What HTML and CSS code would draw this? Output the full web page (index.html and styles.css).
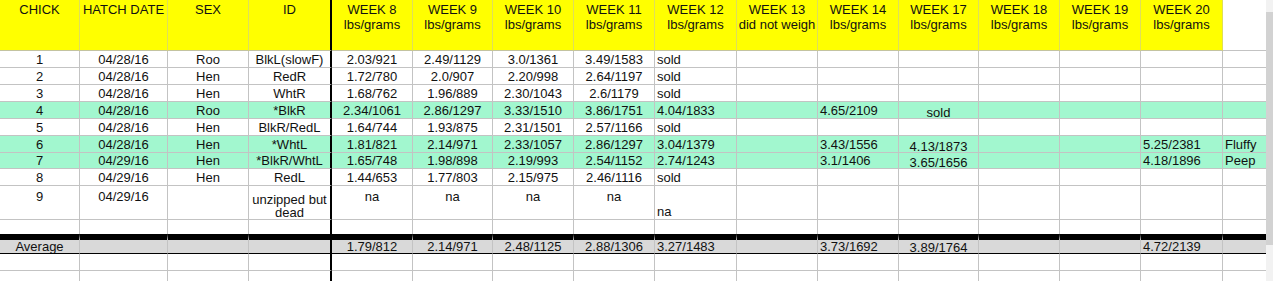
FILE: index.html
```html
<!DOCTYPE html>
<html>
<head>
<meta charset="utf-8">
<link rel="stylesheet" href="styles.css">
</head>
<body>
<div class="sheet">
<table class="grid">
<colgroup>
<col class="w80"><col class="w88"><col class="w81"><col class="w83"><col class="w81"><col class="w80"><col class="w81"><col class="w81"><col class="w82"><col class="w81"><col class="w81"><col class="w80"><col class="w81"><col class="w81"><col class="w82"><col class="w43">
</colgroup>
<thead>
<tr class="hdr">
<th>CHICK</th><th>HATCH DATE</th><th>SEX</th><th class="idc">ID</th>
<th>WEEK 8<br>lbs/grams</th><th>WEEK 9<br>lbs/grams</th><th>WEEK 10<br>lbs/grams</th><th>WEEK 11<br>lbs/grams</th>
<th>WEEK 12<br>lbs/grams</th><th>WEEK 13<br>did not weigh</th><th>WEEK 14<br>lbs/grams</th><th>WEEK 17<br>lbs/grams</th>
<th>WEEK 18<br>lbs/grams</th><th>WEEK 19<br>lbs/grams</th><th>WEEK 20<br>lbs/grams</th><th class="blank last"></th>
</tr>
</thead>
<tbody>
<tr class="r">
<td>1</td><td>04/28/16</td><td>Roo</td><td class="idc">BlkL(slowF)</td><td>2.03/921</td><td>2.49/1129</td><td>3.0/1361</td><td>3.49/1583</td><td class="l">sold</td><td></td><td class="l"></td><td class="w17"></td><td></td><td></td><td class="l"></td><td class="l last"></td>
</tr>
<tr class="r">
<td>2</td><td>04/28/16</td><td>Hen</td><td class="idc">RedR</td><td>1.72/780</td><td>2.0/907</td><td>2.20/998</td><td>2.64/1197</td><td class="l">sold</td><td></td><td class="l"></td><td class="w17"></td><td></td><td></td><td class="l"></td><td class="l last"></td>
</tr>
<tr class="r">
<td>3</td><td>04/28/16</td><td>Hen</td><td class="idc">WhtR</td><td>1.68/762</td><td>1.96/889</td><td>2.30/1043</td><td>2.6/1179</td><td class="l">sold</td><td></td><td class="l"></td><td class="w17"></td><td></td><td></td><td class="l"></td><td class="l last"></td>
</tr>
<tr class="r green">
<td>4</td><td>04/28/16</td><td>Roo</td><td class="idc">*BlkR</td><td>2.34/1061</td><td>2.86/1297</td><td>3.33/1510</td><td>3.86/1751</td><td class="l">4.04/1833</td><td></td><td class="l">4.65/2109</td><td class="w17">sold</td><td></td><td></td><td class="l"></td><td class="l last"></td>
</tr>
<tr class="r">
<td>5</td><td>04/28/16</td><td>Hen</td><td class="idc">BlkR/RedL</td><td>1.64/744</td><td>1.93/875</td><td>2.31/1501</td><td>2.57/1166</td><td class="l">sold</td><td></td><td class="l"></td><td class="w17"></td><td></td><td></td><td class="l"></td><td class="l last"></td>
</tr>
<tr class="r green">
<td>6</td><td>04/28/16</td><td>Hen</td><td class="idc">*WhtL</td><td>1.81/821</td><td>2.14/971</td><td>2.33/1057</td><td>2.86/1297</td><td class="l">3.04/1379</td><td></td><td class="l">3.43/1556</td><td class="w17">4.13/1873</td><td></td><td></td><td class="l">5.25/2381</td><td class="l last">Fluffy</td>
</tr>
<tr class="r short green">
<td>7</td><td>04/29/16</td><td>Hen</td><td class="idc">*BlkR/WhtL</td><td>1.65/748</td><td>1.98/898</td><td>2.19/993</td><td>2.54/1152</td><td class="l">2.74/1243</td><td></td><td class="l">3.1/1406</td><td class="w17">3.65/1656</td><td></td><td></td><td class="l">4.18/1896</td><td class="l last">Peep</td>
</tr>
<tr class="r">
<td>8</td><td>04/29/16</td><td>Hen</td><td class="idc">RedL</td><td>1.44/653</td><td>1.77/803</td><td>2.15/975</td><td>2.46/1116</td><td class="l">sold</td><td></td><td class="l"></td><td class="w17"></td><td></td><td></td><td class="l"></td><td class="l last"></td>
</tr>
<tr class="tall">
<td class="top">9</td><td class="top">04/29/16</td><td></td><td class="idc wrap">unzipped but<br>dead</td><td class="top">na</td><td class="top">na</td><td class="top">na</td><td class="top">na</td><td class="l">na</td><td></td><td></td><td></td><td></td><td></td><td></td><td class="last"></td>
</tr>
<tr class="gap">
<td></td><td></td><td></td><td class="idc"></td><td></td><td></td><td></td><td></td><td></td><td></td><td></td><td></td><td></td><td></td><td></td><td class="last"></td>
</tr>
<tr class="avg">
<td>Average</td><td></td><td></td><td class="idc"></td><td>1.79/812</td><td>2.14/971</td><td>2.48/1125</td><td>2.88/1306</td><td class="l">3.27/1483</td><td></td><td class="l">3.73/1692</td><td class="w17">3.89/1764</td><td></td><td></td><td class="l">4.72/2139</td><td class="last"></td>
</tr>
<tr class="r">
<td></td><td></td><td></td><td class="idc"></td><td></td><td></td><td></td><td></td><td></td><td></td><td></td><td></td><td></td><td></td><td></td><td class="last"></td>
</tr>
<tr class="r">
<td></td><td></td><td></td><td class="idc"></td><td></td><td></td><td></td><td></td><td></td><td></td><td></td><td></td><td></td><td></td><td></td><td class="last"></td>
</tr>
</tbody>
</table>
<div class="scroll"><div class="thumb"></div></div>
</div>
</body>
</html>
```

FILE: styles.css
```css
html, body {
  margin: 0;
  padding: 0;
  background: #fff;
}
body {
  width: 1273px;
  height: 281px;
  overflow: hidden;
  font-family: "Liberation Sans", Arial, sans-serif;
  font-size: 13px;
  color: #111;
}
.sheet {
  display: flex;
  align-items: flex-start;
}
.grid {
  border-collapse: separate;
  border-spacing: 0;
  table-layout: fixed;
  width: 1266px;
  flex: none;
}
.w80 { width: 80px; }
.w88 { width: 88px; }
.w81 { width: 81px; }
.w83 { width: 83px; }
.w82 { width: 82px; }
.w43 { width: 43px; }

.grid th,
.grid td {
  box-sizing: border-box;
  padding: 0;
  border-right: 1px solid #c3c3c3;
  border-bottom: 1px solid #c3c3c3;
  white-space: nowrap;
  overflow: hidden;
  text-align: center;
  vertical-align: bottom;
  line-height: 14px;
  font-weight: normal;
}
.grid .last { border-right: none; }
.grid .idc { border-right: 2px solid #000; }

.hdr th {
  height: 51px;
  background: #ffff00;
  border-right-color: #dede5a;
  border-bottom-color: #c3c3a0;
  vertical-align: top;
  line-height: 15px;
  padding-top: 2px;
}
.hdr th.idc { border-right-color: #000; }
.hdr th.blank { background: #fff; border-bottom-color: #c3c3c3; }

.r td { height: 17px; }
.r.short td { height: 16px; }
.green td { background: #a2f7cf; }

.grid td.l { text-align: left; padding-left: 2px; }
.grid td.w17 { line-height: 11px; }

.tall td { height: 34px; }
.tall td.top { vertical-align: top; padding-top: 4px; }
.tall td.wrap { line-height: 13px; white-space: normal; }

.gap td { height: 14px; border-bottom: none; }

.avg td {
  height: 20px;
  background: #d9d9d9;
  border-top: 6px solid #000;
  border-bottom: 1px solid #000;
  line-height: 12px;
}

.scroll {
  width: 7px;
  height: 281px;
  flex: none;
  background: #f2f2f2;
  display: flex;
  flex-direction: column;
  padding-top: 12px;
  box-sizing: border-box;
}
.thumb {
  height: 233px;
  background: #d2d2d2;
}
```
